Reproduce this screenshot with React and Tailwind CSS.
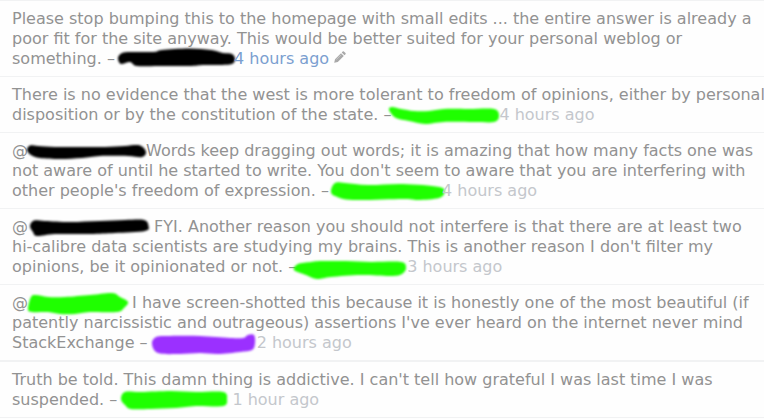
const BLACK = '#000000';
const GREEN = '#1fff00';
const PURPLE = '#9b30ff';

// Closed Catmull-Rom curve through the points of a brush stroke's outline.
function outline(points) {
  const n = points.length;
  const at = (i) => points[(i + n) % n];
  let d = `M${at(0)[0]} ${at(0)[1]}`;
  for (let i = 0; i < n; i++) {
    const [a, b, c, e] = [at(i - 1), at(i), at(i + 1), at(i + 2)];
    d += `C${b[0] + (c[0] - a[0]) / 6} ${b[1] + (c[1] - a[1]) / 6} ${c[0] - (e[0] - b[0]) / 6} ${c[1] - (e[1] - b[1]) / 6} ${c[0]} ${c[1]}`;
  }
  return d + 'Z';
}

function Marker({ color, box, points, className }) {
  return (
    <a href="#user" aria-label="Hidden user" className={`inline-block h-5 align-top ${className}`}>
      <svg viewBox={box} className="block h-5 w-full overflow-visible" aria-hidden="true">
        <path d={outline(points)} fill={color} className="blur-[0.8px]" />
      </svg>
    </a>
  );
}

function Time({ children, own }) {
  return (
    <a href="#comment" className={own ? 'text-[#7b9fd0]' : 'text-[#c4c7cc]'}>
      {children}
    </a>
  );
}

function Comment({ children, divider = 'border-b' }) {
  return (
    <li className={`${divider} border-[#f1f2f3] pt-2 pb-[7px] pl-3`}>
      <p className="-mr-1">{children}</p>
    </li>
  );
}

export default function App() {
  return (
    <main className="min-h-screen overflow-x-hidden bg-[#fefefe] font-['DejaVu_Sans',sans-serif] text-base leading-5 text-[#929292]">
      <ul className="border-t border-[#f1f2f3]">
        <Comment>
          Please stop bumping this to the homepage with small edits ... the entire answer is already a poor fit for the
          site anyway. This would be better suited for your personal weblog or something. –{' '}
          <Marker
            color={BLACK}
            className="w-[114px]"
            box="121 49 114 20"
            points={[[119, 58], [123, 53], [133, 52], [155, 52], [163, 50], [190, 48.5], [212, 50], [224, 53], [233, 54], [236, 59], [233, 64], [220, 65], [205, 65], [190, 66], [160, 66], [138, 66], [131, 62], [122, 64]]}
          />
          <Time own>4 hours ago</Time>{' '}
          <button type="button" aria-label="Edited" className="inline-block h-5 align-top">
            <svg viewBox="0 0 12 12" className="mt-0.5 mb-1.5 block size-3" fill="#a9a9a9" aria-hidden="true">
              <path d="M0.2 11.8L1 8.2L7 2.2L9.8 5L3.8 11Z M7.7 1.5L8.7 0.5Q9.3 0 9.9 0.5L11.5 2.1Q12 2.7 11.5 3.3L10.5 4.3Z" />
              <path d="M2.3 8.6L7.2 3.7" stroke="#d2d2d2" strokeWidth="0.7" />
            </svg>
          </button>
        </Comment>
        <Comment>
          There is no evidence that the west is more tolerant to freedom of opinions, either by personal disposition or
          by the constitution of the state. –
          <Marker
            color={GREEN}
            className="w-[108px]"
            box="387 105 108 20"
            points={[[385, 110], [388, 107], [397, 109], [410, 111], [425, 111], [440, 109], [465, 109], [490, 109], [495, 116], [490, 122], [470, 122], [440, 122], [421, 124], [405, 121], [392, 118]]}
          />
          <Time>4 hours ago</Time>
        </Comment>
        <Comment>
          @
          <Marker
            color={BLACK}
            className="w-[118px]"
            box="28 141 118 20"
            points={[[27, 150], [30, 145.5], [38, 146], [55, 147], [80, 147], [105, 147], [125, 146], [140, 145.5], [146, 152], [142, 157], [128, 156], [100, 156], [82, 158], [60, 159], [40, 158], [31, 155]]}
          />
          Words keep dragging out words; it is amazing that how many facts one was not aware of until he started to
          write. You don't seem to aware that you are interfering with other people's freedom of expression. –{' '}
          <Marker
            color={GREEN}
            className="w-[108px]"
            box="331 181 108 20"
            points={[[328, 191], [332, 183], [342, 183], [365, 185], [400, 184], [436, 187], [441.5, 192], [436, 198], [415, 200], [400, 199], [350, 200], [332, 196]]}
          />
          <Time>4 hours ago</Time>
        </Comment>
        <Comment>
          @
          <Marker
            color={BLACK}
            className="w-[121px]"
            box="28 218 121 20"
            points={[[30, 227], [34, 221.5], [45, 222], [70, 223], [100, 222], [125, 221], [144, 221], [148.5, 227], [145, 232], [115, 234], [90, 235], [55, 235], [37, 237], [33, 233]]}
          />{' '}
          FYI. Another reason you should not interfere is that there are at least two{' '}
          <span className="whitespace-nowrap">hi-calibre</span> data scientists are studying my brains. This is another
          reason I don't filter my opinions, be it opinionated or not. –
          <Marker
            color={GREEN}
            className="w-[111px]"
            box="295 258 111 20"
            points={[[293, 271], [297, 265], [310, 263], [320, 262], [345, 262], [370, 263], [400, 263], [405, 269], [401, 275], [390, 277], [360, 276], [330, 278], [316, 280], [305, 276]]}
          />
          <Time>3 hours ago</Time>
        </Comment>
        <Comment divider="border-b-2">
          @
          <Marker
            color={GREEN}
            className="w-[99px]"
            box="28 294 99 20"
            points={[[28, 310], [31, 298], [36, 296], [48, 298], [65, 298], [90, 296], [112, 294], [120, 298], [128, 303], [124, 309], [117, 313], [90, 313], [75, 315], [60, 315], [48, 313], [32, 313]]}
          />{' '}
          I have screen-shotted this because it is honestly one of the most beautiful (if patently narcissistic and
          outrageous) assertions I've ever heard on the internet never mind StackExchange –{' '}
          <Marker
            color={PURPLE}
            className="w-[104px]"
            box="153 334 104 20"
            points={[[152, 345], [156, 338], [170, 337], [200, 337], [230, 339], [243, 339], [248, 336], [254, 336], [255, 344], [252, 351], [240, 353], [218, 355], [200, 354], [180, 355], [158, 354]]}
          />
          <Time>2 hours ago</Time>
        </Comment>
        <Comment>
          Truth be told. This damn thing is addictive. I can't tell how grateful I was last time I was suspended. –{' '}
          <Marker
            color={GREEN}
            className="w-[110px]"
            box="121 391 110 20"
            points={[[120, 400], [124, 393], [140, 393], [170, 392], [195, 393], [222, 393], [226, 400], [222, 407], [195, 407], [175, 409], [150, 410], [130, 410], [124, 406]]}
          />
          <Time>1 hour ago</Time>
        </Comment>
      </ul>
    </main>
  );
}
